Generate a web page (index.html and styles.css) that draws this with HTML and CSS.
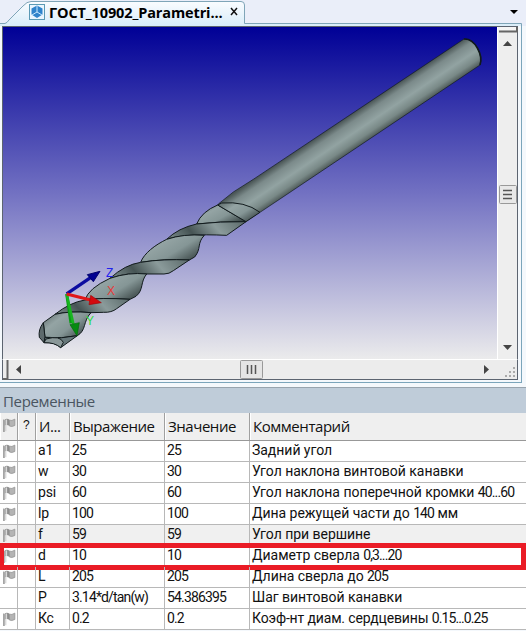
FILE: index.html
```html
<!DOCTYPE html>
<html lang="ru">
<head>
<meta charset="utf-8">
<title>ГОСТ_10902</title>
<link rel="stylesheet" href="styles.css">
</head>
<body>
<svg class="defs" width="0" height="0">
  <symbol id="flag" viewBox="0 0 14 16">
    <path d="M1 2v12h1.5V3" fill="#999"/>
    <path d="M2.500 2.200Q5 1 7 2.700V8.500Q5 7 2.500 8z" fill="#8d8d8d"/>
    <path d="M4 2.300V7.500" stroke="#d8d8d8" stroke-width="1.500"/>
    <path d="M7 3Q9 4 12 2V8Q9 9.500 7 8.500z" fill="#b4b4b4" stroke="#969696" stroke-width=".8"/>
    <path d="M3.500 8v5.500" stroke="#ccc"/>
  </symbol>
</svg>
<header class="tabs">
  <svg class="tabshape" width="526" height="26">
    <defs><linearGradient id="tg" x2="0" y2="1"><stop stop-color="#fafcff"/><stop offset="1" stop-color="#d9edf9"/></linearGradient></defs>
    <path d="M0 23.500H5Q7 23 9 20L23 6Q27 1.500 31 1.500H241Q244.500 1.500 244.500 5V23.500H521.500V26H0z" fill="url(#tg)"/>
    <path d="M0 23.500H5Q7 23 9 20L23 6Q27 1.500 31 1.500H241Q244.500 1.500 244.500 5V23.500H521.500V26" fill="none" stroke="#7fa5b8"/>
    <rect x="29.500" y="4.500" width="15" height="15" fill="#eaf6ff" stroke="#5b9ab5"/>
    <path d="M37 5.500L42.500 8.500V14.500L37 18L31.500 14.500V8.500z" fill="#2f83cb"/>
    <path d="M37 6V12L32 15M37 12L42 15" fill="none" stroke="#c9e9ff"/>
    <path d="M231 8L237 15M237 8L231 15" stroke="#111" stroke-width="1.500"/>
    <path d="M510 10H518L514 14z" fill="#000"/>
  </svg>
  <span class="tabtitle">ГОСТ_10902_Parametri...</span>
</header>
<main class="window">
  <section class="view">
    <svg width="494" height="332" viewBox="3 27 494 332">
      <defs>
        <linearGradient id="bg" x2="0" y2="1"><stop stop-color="#000096"/><stop offset=".5" stop-color="#7271c2"/><stop offset="1" stop-color="#ebebec"/></linearGradient>
        <linearGradient id="sh" gradientUnits="userSpaceOnUse" x1="985" y1="-190" x2="1040" y2="-108"><stop stop-color="#4b5757"/><stop offset=".2" stop-color="#7b8a8a"/><stop offset=".5" stop-color="#92a3a2"/><stop offset=".75" stop-color="#798987"/><stop offset="1" stop-color="#3c4645"/></linearGradient>
        <linearGradient id="fl" x1="0" y1="0" x2="1" y2=".7"><stop stop-color="#586565"/><stop offset=".35" stop-color="#94a4a4"/><stop offset=".65" stop-color="#859696"/><stop offset="1" stop-color="#3d4949"/></linearGradient>
        <linearGradient id="ld" x1="0" y1=".6" x2="1" y2=".4"><stop stop-color="#748484"/><stop offset=".3" stop-color="#465454"/><stop offset=".65" stop-color="#8b9b9b"/><stop offset="1" stop-color="#637272"/></linearGradient>
      </defs>
      <rect x="3" y="27" width="494" height="332" fill="url(#bg)"/>
      <g transform="translate(20 180) scale(.33333)" stroke="#111a1c" stroke-width="3" stroke-linejoin="round">
        <path d="M595 72L640 36L700 -2L1332 -423C1365 -425 1390 -375 1380 -345L780 57L678 125L593 75z" fill="url(#sh)" stroke="none"/>
        <path d="M595 72L640 36L700 -2L1332 -423C1365 -425 1390 -375 1380 -345L780 57L720 97" fill="none" stroke-width="2"/>
        <path d="M1332 -423C1365 -425 1390 -375 1380 -345" fill="none" stroke-width="5"/>
        <path d="M593 75Q545 95 530 132Q600 124 678 125z" fill="url(#fl)"/>
        <path d="M593 75L605 69Q675 63 720 97L678 125z" fill="url(#fl)"/>
        <path d="M440 178Q475 144 530 132Q600 124 678 125L620 166Q490 160 440 178z" fill="url(#ld)"/>
        <path d="M440 178C405 195 372 220 362 247Q430 236 508 240L524 231C545 205 530 190 553 166Q490 161 440 178z" fill="url(#fl)"/>
        <path d="M270 295Q315 254 362 247Q430 236 508 240L460 272Q448 282 432 282L380 282Q325 276 270 295z" fill="url(#ld)"/>
        <path d="M270 295Q205 325 195 360Q240 352 330 358L348 349C372 329 360 306 380 282Q325 276 270 295z" fill="url(#fl)"/>
        <path d="M105 403Q150 367 195 360Q240 352 330 358L290 386Q275 398 250 397L213 398Q150 392 105 403z" fill="url(#ld)"/>
        <path d="M105 403L70 428L75 472Q125 477 172 467C200 451 188 424 213 398Q150 392 105 403z" fill="url(#fl)"/>
        <path d="M70 428Q54 449 58 472L72 488L75 472z" fill="#5d6a6c"/>
        <path d="M75 472Q125 477 172 467L122 503Q106 486 72 488z" fill="#66777a"/>
        <path d="M72 488L78 477Q120 465 130 487L122 503Q104 487 72 488" fill="#8a9899"/>
        <path d="M140 342L153 430" stroke="#0b9c16" stroke-width="9"/>
        <path d="M140 342L160 432" stroke="#17b51f" stroke-width="8"/>
        <path d="M150 434L178 428L171 467z" fill="#078b12" stroke="#056b0b" stroke-width="2"/>
        <path d="M140 342L216 290" stroke="#0c0ca0" stroke-width="10"/>
        <path d="M202 284L240 274L220 305z" fill="#000091" stroke="#00006b"/>
        <path d="M140 342L212 360" stroke="#e01619" stroke-width="10"/>
        <path d="M212 346L244 368L207 374z" fill="#d40a0e" stroke="#9f080a" stroke-width="2"/>
      </g>
      <g class="axis"><text x="106" y="277" fill="#2020ee">Z</text><text x="107" y="295" fill="#e83a3a">X</text><text x="86" y="325" fill="#2ddd3a">Y</text></g>
    </svg>
    <aside class="vscroll">
      <svg width="20" height="332" viewBox="0 0 20 332">
        <path d="M1 4.500H19V0" fill="none" stroke="#666" stroke-width="2"/><path d="M0 0H18V3H0z" fill="#f5f5f5"/>
        <path d="M5 19L9.500 14L14 19z" fill="#444"/><path d="M5 318H14L9.500 323z" fill="#444"/>
        <rect x="1.500" y="158.500" width="17" height="18" rx="1" fill="#e8e8e8" stroke="#999"/>
        <path d="M5 163.500H14M5 167.500H14M5 171.500H14" stroke="#555" stroke-width="1.500"/>
      </svg>
    </aside>
  </section>
  <footer class="hscroll">
    <svg width="514" height="20" viewBox="0 0 514 20">
      <path d="M4.500 0V19H0" fill="none" stroke="#666" stroke-width="2"/>
      <path d="M18 5V14L13 9.500zM481 5V14L486 9.500z" fill="#444"/>
      <rect x="237.500" y=".5" width="22" height="18" rx="1" fill="#e5e5e5" stroke="#999"/>
      <path d="M244.500 5V14M248.500 5V14M252.500 5V14" stroke="#555" stroke-width="1.500"/>
      <path d="M503 16h2m2 0h2m2 0h2M507 12h2m2 0h2M511 8h2" transform="translate(-1)" stroke="#aaa" stroke-width="2"/>
    </svg>
  </footer>
</main>
<section class="panel">
  <h1>Переменные</h1>
  <div class="row head"><span><svg><use href="#flag"/></svg></span><span class="q">?</span><span>И...</span><span>Выражение</span><span>Значение</span><span>Комментарий</span></div>
  <div class="row"><span><svg><use href="#flag"/></svg></span><span></span><span>a1</span><span>25</span><span>25</span><span>Задний угол</span></div>
  <div class="row"><span><svg><use href="#flag"/></svg></span><span></span><span>w</span><span>30</span><span>30</span><span>Угол наклона винтовой канавки</span></div>
  <div class="row"><span><svg><use href="#flag"/></svg></span><span></span><span>psi</span><span>60</span><span>60</span><span>Угол наклона поперечной кромки <b>40...60</b></span></div>
  <div class="row"><span><svg><use href="#flag"/></svg></span><span></span><span>lp</span><span>100</span><span>100</span><span>Дина режущей части до <b>140</b> мм</span></div>
  <div class="row shade"><span><svg><use href="#flag"/></svg></span><span></span><span>f</span><span>59</span><span>59</span><span>Угол при вершине</span></div>
  <div class="row marked"><span><svg><use href="#flag"/></svg></span><span></span><span>d</span><span>10</span><span>10</span><span>Диаметр сверла <b>0,3...20</b></span></div>
  <div class="row"><span><svg><use href="#flag"/></svg></span><span></span><span>L</span><span>205</span><span>205</span><span>Длина сверла до <b>205</b></span></div>
  <div class="row"><span></span><span></span><span>P</span><span>3.14*d/tan(w)</span><span>54.386395</span><span>Шаг винтовой канавки</span></div>
  <div class="row tight"><span><svg><use href="#flag"/></svg></span><span></span><span>Кс</span><span>0.2</span><span>0.2</span><span>Коэф-нт диам. сердцевины <b>0.15...0.25</b></span></div>
</section>
</body>
</html>
```
FILE: styles.css
```css
* { box-sizing: border-box; }
body { margin: 0; width: 526px; height: 631px; overflow: hidden; background: #f4f8fc; }
svg { display: block; }
.defs { position: absolute; }
.tabs { position: relative; height: 26px; background: #eaeef9; }
.tabshape { position: absolute; inset: 0; }
.tabtitle { position: absolute; left: 49px; top: 1px; font: bold 14.5px/24px "Open Sans", sans-serif; letter-spacing: -.13px; color: #000; white-space: nowrap; }
.window { width: 522px; height: 357px; padding-left: 2px; padding-right: 3px; border-right: 1px solid #7ba5bb; border-bottom: 1px solid #7ba5bb; background: #f4f8fc; }
.view { display: flex; height: 333px; border: solid #5c6470; border-width: 1px 0 0 1px; border-right: 1px solid #5c6470; }
.vscroll { width: 20px; background: #eee; border-left: 1px solid #fff; }
.hscroll { height: 21px; background: #ececec; border: 1px solid #5c6470; border-top-color: #fff; }
.axis { font: 12px "Liberation Sans", sans-serif; }
.panel { margin-top: 4px; border-top: 1px solid #98a4ae; background: #fff; }
.panel h1 { margin: 0; height: 25px; padding-left: 3px; background: #bfccd9; color: #4a5561; font: 15px/26px "Open Sans", sans-serif; letter-spacing: -.35px; }
.row { display: grid; grid-template-columns: 18px 18px 34px 95px 85px 1fr; height: 21px; font: 14px/19px Roboto, sans-serif; color: #111; border-bottom: 1px solid #b8b8b8; position: relative; }
.row > span { border-right: 1px solid #b8b8b8; padding-left: 2px; white-space: nowrap; letter-spacing: -.85px; }
.row > span:nth-child(3) { letter-spacing: -.2px; }
.row > span:last-child { border-right: 0; letter-spacing: -.03px; }
.row b { font-weight: normal; letter-spacing: -.9px; }
.row.tight > span:last-child { letter-spacing: -.15px; }
.row svg { width: 15px; height: 17px; margin: 2px 0 0; }
.row.head { height: 28px; background: #efefef; font: 15px/27px "Open Sans", sans-serif; border-color: #989898; }
.row.head > span { padding-left: 3px; letter-spacing: -.45px; border-color: #a0a0a0; box-shadow: inset 1px 0 #fff; }
.row.head .q { font: 12px/25px "Liberation Sans", sans-serif; padding-left: 5px; }
.row.head svg { margin: 4px 0 0 -1px; }
.shade { background: #f0f0f0; }
.marked::after { content: ""; position: absolute; left: -1px; right: 0; top: -3px; bottom: -4px; border: 5px solid #ea1c26; }
```
